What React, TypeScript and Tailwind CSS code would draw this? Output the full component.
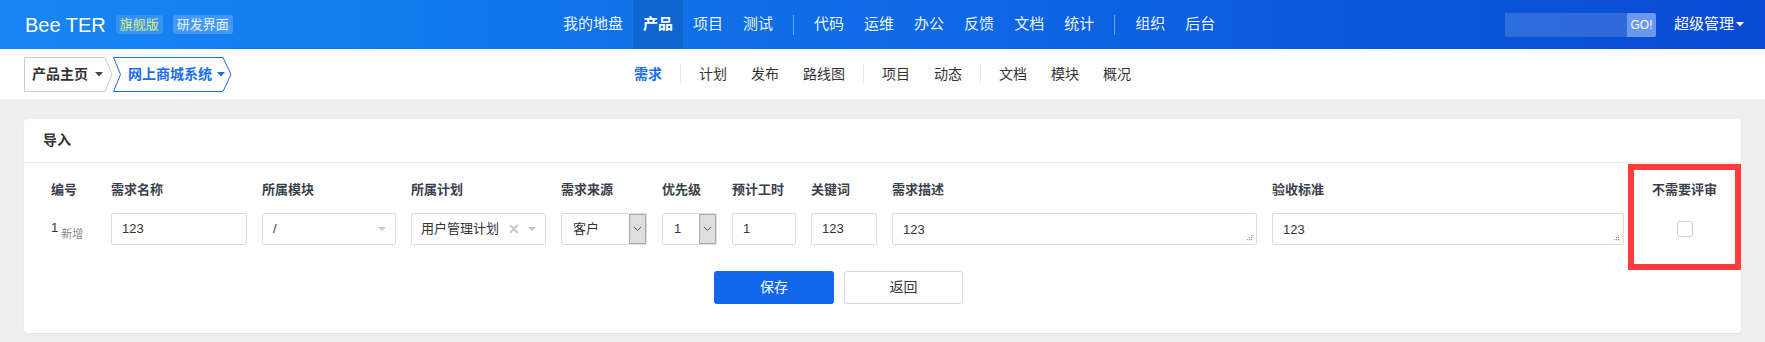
import React from "react";

const mainNav = [["我的地盘", "产品", "项目", "测试"], ["代码", "运维", "办公", "反馈", "文档", "统计"], ["组织", "后台"]];
const subNav = [["需求"], ["计划", "发布", "路线图"], ["项目", "动态"], ["文档", "模块", "概况"]];

function Caret({ className = "" }: { className?: string }) {
  return (
    <svg width="8" height="5" viewBox="0 0 8 5" className={className}>
      <path d="M0 0h8L4 4.5z" fill="currentColor" />
    </svg>
  );
}

function Chevron() {
  return (
    <svg width="9" height="6" viewBox="0 0 9 6">
      <path d="M1 1l3.5 3.5L8 1" fill="none" stroke="#555" strokeWidth="1" />
    </svg>
  );
}

function Grip() {
  return (
    <svg width="7" height="7" viewBox="0 0 7 7" className="absolute right-[3px] bottom-[3px]">
      <g fill="#999">
        <rect x="5" y="1" width="1.2" height="1.2" />
        <rect x="3" y="3" width="1.2" height="1.2" />
        <rect x="5" y="3" width="1.2" height="1.2" />
        <rect x="1" y="5" width="1.2" height="1.2" />
        <rect x="3" y="5" width="1.2" height="1.2" />
        <rect x="5" y="5" width="1.2" height="1.2" />
      </g>
    </svg>
  );
}

const box = "h-[32px] border border-[#dcdcdc] rounded-[2px] bg-white text-[13px] text-[#333] flex items-center";

function Header() {
  return (
    <div className="h-[49px] flex items-stretch text-white bg-linear-to-r from-[#1786f4] via-[#0f6ae6] to-[#0a4ad2]">
      <div className="w-[553px] flex items-center pl-[25px]">
        <span className="text-[20px] font-['Liberation_Sans',sans-serif] leading-none">Bee TER</span>
        <span className="ml-[10px] h-[19px] px-[4px] rounded-[3px] bg-white/15 text-[13px] leading-[19px] text-[#dcef7c]">旗舰版</span>
        <span className="ml-[10px] h-[19px] px-[4px] rounded-[3px] bg-white/20 text-[13px] leading-[19px] text-white/90">研发界面</span>
      </div>
      <div className="flex items-stretch text-[15px]">
        {mainNav.map((group, gi) => (
          <React.Fragment key={gi}>
            {gi > 0 && <div className="w-px h-[20px] self-center mx-[10px] bg-white/40" />}
            {group.map((item) => (
              <div
                key={item}
                className={`flex items-center px-[10px] ${item === "产品" ? "bg-black/10 font-bold" : "text-white/95"}`}
              >
                {item}
              </div>
            ))}
          </React.Fragment>
        ))}
      </div>
      <div className="ml-auto flex items-center pr-[21px]">
        <div className="flex h-[24px]">
          <div className="w-[122px] bg-white/15" />
          <div className="w-[29px] bg-[#6a98f0] rounded-r-[2px] flex items-center justify-center text-[12px] font-['Liberation_Sans',sans-serif]">GO!</div>
        </div>
        <span className="ml-[18px] text-[15px]">超级管理</span>
        <Caret className="ml-[2px]" />
      </div>
    </div>
  );
}

function SubNav() {
  return (
    <div className="h-[50px] bg-white grid grid-cols-[1fr_auto_1fr] items-center">
      <div className="flex items-center pl-[24px] text-[14px] font-bold">
        <div className="relative w-[89px] h-[35px] flex items-center pl-[8px] text-[#333]">
          <svg width="89" height="35" className="absolute inset-0">
            <path d="M0.5 0.5H81L88 17.5L81 34.5H0.5Z" fill="none" stroke="#c9ccd8" />
          </svg>
          <span className="relative">产品主页</span>
          <Caret className="relative ml-[7px] text-[#444]" />
        </div>
        <div className="relative w-[119px] h-[35px] flex items-center pl-[15px] text-[#1a6ce8]">
          <svg width="119" height="35" className="absolute inset-0">
            <path d="M0.5 0.5H110L118 17.5L110 34.5H0.5L7.5 17.5Z" fill="none" stroke="#1a6ce8" />
          </svg>
          <span className="relative">网上商城系统</span>
          <Caret className="relative ml-[5px]" />
        </div>
      </div>
      <div className="flex items-center text-[14px] text-[#333]">
        {subNav.map((group, gi) => (
          <React.Fragment key={gi}>
            {gi > 0 && <div className="w-px h-[20px] mx-[6px] bg-[#e6e6e6]" />}
            {group.map((item) => (
              <span key={item} className={`px-[12px] ${gi === 0 ? "text-[#1a6ce8] font-bold" : ""}`}>
                {item}
              </span>
            ))}
          </React.Fragment>
        ))}
      </div>
      <div />
    </div>
  );
}

function Col({ label, w, children }: { label: string; w: string; children: React.ReactNode }) {
  return (
    <div className={`${w} flex flex-col`}>
      <div className="h-[20px] leading-[20px] text-[13px] font-bold text-[#3a3f4b]">{label}</div>
      <div className="mt-[13px]">{children}</div>
    </div>
  );
}

function ChosenArrow() {
  return (
    <svg width="8" height="4" viewBox="0 0 8 4" className="ml-auto">
      <path d="M0 0h8L4 4z" fill="#c8c8c8" />
    </svg>
  );
}

function NativeSelect({ value, w }: { value: string; w: string }) {
  return (
    <div className={`${box} ${w} pl-[11px] pr-0 overflow-hidden`}>
      <span>{value}</span>
      <div className="ml-auto h-full w-[17px] bg-[#dedede] border-l border-[#a9a9a9] border-y border-r flex items-center justify-center">
        <Chevron />
      </div>
    </div>
  );
}

export default function App() {
  return (
    <div className="h-[342px] overflow-hidden bg-[#efefef] font-['Liberation_Sans','Noto_Sans_CJK_SC',sans-serif]">
      <Header />
      <SubNav />
      <div className="mx-[24px] mt-[20px] bg-white rounded-[4px] shadow-[0_1px_2px_rgba(0,0,0,0.06)]">
        <div className="h-[44px] flex items-center pl-[19px] border-b border-[#ebebeb] text-[14px] font-bold text-[#333]">导入</div>
        <div className="flex items-start">
          <div className="pl-[20px] pt-[17px] pb-[29px]">
            <div className="flex gap-[15px]">
              <div className="w-[52px] flex flex-col pl-[7px]">
                <div className="h-[20px] leading-[20px] text-[13px] font-bold text-[#3a3f4b]">编号</div>
                <div className="mt-[13px] h-[32px] flex items-center text-[13px] text-[#333]">
                  <span className="-mt-[2px] text-[#333]">1</span>
                  <span className="ml-[3px] mt-[11px] text-[11px] text-[#888]">新增</span>
                </div>
              </div>
              <Col label="需求名称" w="w-[136px]">
                <div className={`${box} px-[10px]`}>123</div>
              </Col>
              <Col label="所属模块" w="w-[134px]">
                <div className={`${box} px-[10px] pr-[9px]`}>
                  <span>/</span>
                  <ChosenArrow />
                </div>
              </Col>
              <Col label="所属计划" w="w-[135px]">
                <div className={`${box} pl-[9px] pr-[9px]`}>
                  <span>用户管理计划</span>
                  <span className="ml-[9px] text-[14px] font-bold text-[#c8c8c8]">✕</span>
                  <ChosenArrow />
                </div>
              </Col>
              <Col label="需求来源" w="w-[86px]">
                <NativeSelect value="客户" w="w-[86px]" />
              </Col>
              <Col label="优先级" w="w-[55px]">
                <NativeSelect value="1" w="w-[55px]" />
              </Col>
              <Col label="预计工时" w="w-[64px]">
                <div className={`${box} px-[10px]`}>1</div>
              </Col>
              <Col label="关键词" w="w-[66px]">
                <div className={`${box} px-[10px]`}>123</div>
              </Col>
              <Col label="需求描述" w="w-[365px]">
                <div className={`${box} relative items-start pt-[6px] px-[10px]`}>
                  123
                  <Grip />
                </div>
              </Col>
              <Col label="验收标准" w="w-[352px]">
                <div className={`${box} relative items-start pt-[6px] px-[10px]`}>
                  123
                  <Grip />
                </div>
              </Col>
            </div>
            <div className="mt-[26px] flex justify-center gap-[10px] pl-[9px]">
              <button className="w-[120px] h-[33px] rounded-[3px] bg-[#1068e8] text-white text-[14px]">保存</button>
              <button className="w-[119px] h-[33px] rounded-[3px] bg-white border border-[#d3d9e2] text-[#333] text-[14px]">返回</button>
            </div>
          </div>
          <div className="flex-1 ml-[4px] mt-[1px] h-[106px] border-[6px] border-[#ff3b3b] flex flex-col items-center">
            <div className="mt-[10px] h-[20px] leading-[20px] text-[13px] font-bold text-[#3a3f4b]">不需要评审</div>
            <div className="mt-[21px] w-[16px] h-[16px] rounded-[3px] border border-[#cfcfcf] bg-white" />
          </div>
        </div>
      </div>
    </div>
  );
}
